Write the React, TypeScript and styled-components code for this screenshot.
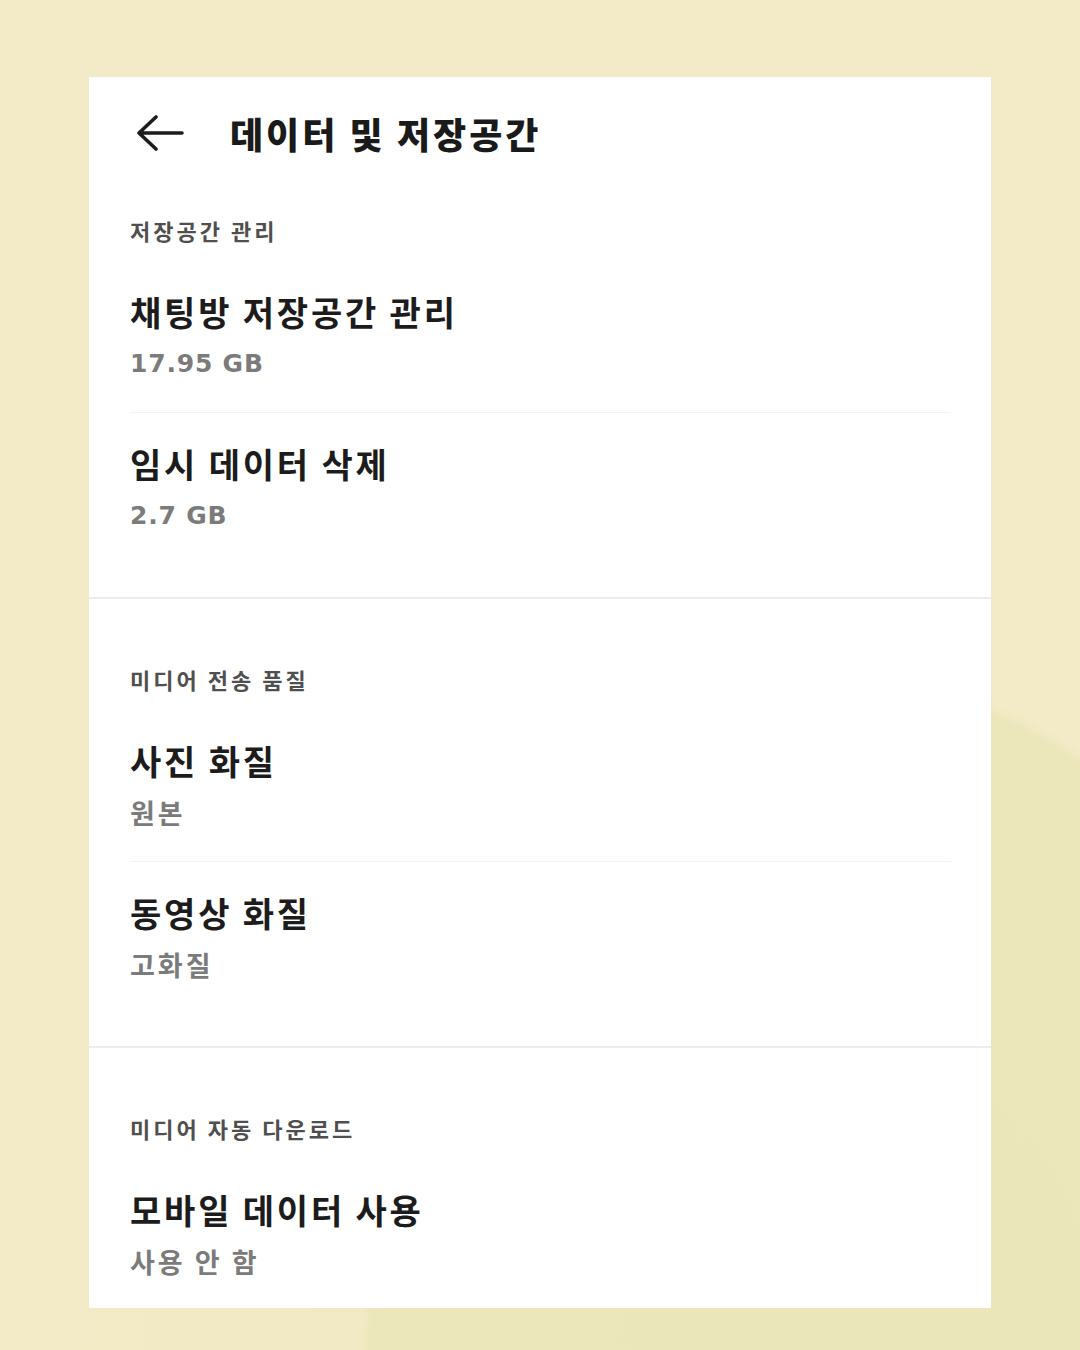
import styled, { createGlobalStyle } from "styled-components";

const GlobalStyle = createGlobalStyle`
  html, body {
    margin: 0;
    padding: 0;
  }

  body {
    font-family: "Noto Sans CJK KR", "Noto Sans", sans-serif;
    background: #f3ebc7;
  }
`;

const Page = styled.div`
  width: 1080px;
  height: 1350px;
  box-sizing: border-box;
  padding: 77px 89px 0;
  overflow: hidden;
  background:
    radial-gradient(ellipse 500px 702px at 860px 1380px, #ebe5ba 0%, #ece6bb 98%, rgba(236, 230, 187, 0) 100%),
    linear-gradient(90deg, #f3ebc7 0%, #f0e9c2 50%, #ece6bb 100%) bottom / 100% 42px no-repeat,
    #f3ebc7;
`;

const Card = styled.div`
  width: 902px;
  height: 1231px;
  background: #ffffff;
  overflow: hidden;
`;

const TopBar = styled.header`
  display: flex;
  align-items: center;
  height: 112px;
  padding-left: 47px;
`;

const BackButton = styled.button`
  display: flex;
  align-items: center;
  justify-content: center;
  width: 48px;
  height: 36px;
  padding: 0;
  border: none;
  background: none;
  color: #1c1c1c;
  cursor: pointer;
`;

const PageTitle = styled.h1`
  margin: 0 0 0 46px;
  font-size: 36px;
  font-weight: 900;
  line-height: 40px;
  letter-spacing: 3px;
  color: #1a1a1a;
`;

const Section = styled.section<{ $first?: boolean }>`
  padding: ${({ $first }) => ($first ? "26px" : "65px")} 40px 33px 41px;
  border-top: ${({ $first }) => ($first ? "none" : "2px solid #ececec")};
`;

const SectionLabel = styled.h2`
  margin: 0 0 16px;
  font-size: 22px;
  font-weight: 700;
  line-height: 30px;
  letter-spacing: 3px;
  color: #4f4f4f;
`;

const Item = styled.div`
  padding: 31px 0 28px;

  & + & {
    border-top: 1px solid #f2f2f2;
  }
`;

const ItemTitle = styled.div`
  font-size: 34px;
  font-weight: 700;
  line-height: 40px;
  letter-spacing: 2.8px;
  color: #1c1c1c;
`;

const ItemValue = styled.div<{ $numeric?: boolean }>`
  margin-top: 12px;
  font-family: ${({ $numeric }) =>
    $numeric ? `"DejaVu Sans", "Noto Sans CJK KR", sans-serif` : `"Noto Sans CJK KR", sans-serif`};
  font-size: ${({ $numeric }) => ($numeric ? "25px" : "27px")};
  font-weight: 700;
  line-height: 40px;
  letter-spacing: ${({ $numeric }) => ($numeric ? "0.8px" : "3px")};
  color: #7b7b7b;
`;

const BackArrow = () => (
  <svg width="48" height="36" viewBox="0 0 48 36" fill="none">
    <path
      d="M3 18H46M20 2L3 18L20 34"
      stroke="currentColor"
      strokeWidth="3.6"
      strokeLinecap="round"
      strokeLinejoin="round"
    />
  </svg>
);

type Setting = { title: string; value: string };

const sections: { label: string; items: Setting[] }[] = [
  {
    label: "저장공간 관리",
    items: [
      { title: "채팅방 저장공간 관리", value: "17.95 GB" },
      { title: "임시 데이터 삭제", value: "2.7 GB" },
    ],
  },
  {
    label: "미디어 전송 품질",
    items: [
      { title: "사진 화질", value: "원본" },
      { title: "동영상 화질", value: "고화질" },
    ],
  },
  {
    label: "미디어 자동 다운로드",
    items: [{ title: "모바일 데이터 사용", value: "사용 안 함" }],
  },
];

export default function App() {
  return (
    <>
      <GlobalStyle />
      <Page>
        <Card>
          <TopBar>
            <BackButton aria-label="뒤로">
              <BackArrow />
            </BackButton>
            <PageTitle>데이터 및 저장공간</PageTitle>
          </TopBar>
          {sections.map((section, i) => (
            <Section key={section.label} $first={i === 0}>
              <SectionLabel>{section.label}</SectionLabel>
              {section.items.map((item) => (
                <Item key={item.title}>
                  <ItemTitle>{item.title}</ItemTitle>
                  <ItemValue $numeric={/\d/.test(item.value)}>{item.value}</ItemValue>
                </Item>
              ))}
            </Section>
          ))}
        </Card>
      </Page>
    </>
  );
}
